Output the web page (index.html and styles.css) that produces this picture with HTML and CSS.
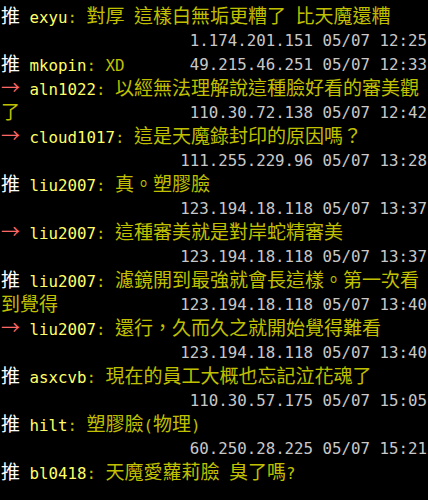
FILE: index.html
```html
<!DOCTYPE html>
<html>
<head>
<meta charset="utf-8">
<link rel="stylesheet" href="styles.css">
</head>
<body>
<div class="term">
  <div class="line"><span class="l"><span class="c tag-push">推</span> <span class="user">exyu</span><span class="txt">: <span class="c">對厚</span> <span class="c">這樣白無垢更糟了</span> <span class="c">比天魔還糟</span></span></span></div>
  <div class="line"><span class="l"></span><span class="ip">1.174.201.151 05/07 12:25</span></div>
  <div class="line"><span class="l"><span class="c tag-push">推</span> <span class="user">mkopin</span><span class="txt">: XD</span></span><span class="ip">49.215.46.251 05/07 12:33</span></div>
  <div class="line"><span class="l"><span class="c tag-arrow">→</span> <span class="user">aln1022</span><span class="txt">: <span class="c">以經無法理解說這種臉好看的審美觀</span></span></span></div>
  <div class="line"><span class="l"><span class="txt"><span class="c">了</span></span></span><span class="ip">110.30.72.138 05/07 12:42</span></div>
  <div class="line"><span class="l"><span class="c tag-arrow">→</span> <span class="user">cloud1017</span><span class="txt">: <span class="c">這是天魔錄封印的原因嗎？</span></span></span></div>
  <div class="line"><span class="l"></span><span class="ip">111.255.229.96 05/07 13:28</span></div>
  <div class="line"><span class="l"><span class="c tag-push">推</span> <span class="user">liu2007</span><span class="txt">: <span class="c">真。塑膠臉</span></span></span></div>
  <div class="line"><span class="l"></span><span class="ip">123.194.18.118 05/07 13:37</span></div>
  <div class="line"><span class="l"><span class="c tag-arrow">→</span> <span class="user">liu2007</span><span class="txt">: <span class="c">這種審美就是對岸蛇精審美</span></span></span></div>
  <div class="line"><span class="l"></span><span class="ip">123.194.18.118 05/07 13:37</span></div>
  <div class="line"><span class="l"><span class="c tag-push">推</span> <span class="user">liu2007</span><span class="txt">: <span class="c">濾鏡開到最強就會長這樣。第一次看</span></span></span></div>
  <div class="line"><span class="l"><span class="txt"><span class="c">到覺得</span></span></span><span class="ip">123.194.18.118 05/07 13:40</span></div>
  <div class="line"><span class="l"><span class="c tag-arrow">→</span> <span class="user">liu2007</span><span class="txt">: <span class="c">還行，久而久之就開始覺得難看</span></span></span></div>
  <div class="line"><span class="l"></span><span class="ip">123.194.18.118 05/07 13:40</span></div>
  <div class="line"><span class="l"><span class="c tag-push">推</span> <span class="user">asxcvb</span><span class="txt">: <span class="c">現在的員工大概也忘記泣花魂了</span></span></span></div>
  <div class="line"><span class="l"></span><span class="ip">110.30.57.175 05/07 15:05</span></div>
  <div class="line"><span class="l"><span class="c tag-push">推</span> <span class="user">hilt</span><span class="txt">: <span class="c">塑膠臉</span>(<span class="c">物理</span>)</span></span></div>
  <div class="line"><span class="l"></span><span class="ip">60.250.28.225 05/07 15:21</span></div>
  <div class="line"><span class="l"><span class="c tag-push">推</span> <span class="user">bl0418</span><span class="txt">: <span class="c">天魔愛蘿莉臉</span> <span class="c">臭了嗎</span>?</span></span></div>
</div>
</body>
</html>
```

FILE: styles.css
```css
html, body {
  margin: 0;
  padding: 0;
  background: #000;
}
.term {
  width: 428px;
  padding: 5px 1px 0 1px;
  box-sizing: border-box;
  font-family: "DejaVu Sans Mono", monospace;
  font-size: 15.78px;
  color: #c0c0c0;
}
.line {
  display: flex;
  justify-content: space-between;
  height: 24px;
  line-height: 24px;
  white-space: pre;
}
.c {
  font-family: "Noto Sans CJK TC", sans-serif;
  font-size: 19px;
  line-height: 1;
}
.tag-push {
  color: #ffffff;
}
.tag-arrow {
  color: #ff6666;
}
.user {
  color: #ffff66;
}
.txt {
  color: #c0c000;
}
.ip {
  color: #c8c8c8;
}
```
